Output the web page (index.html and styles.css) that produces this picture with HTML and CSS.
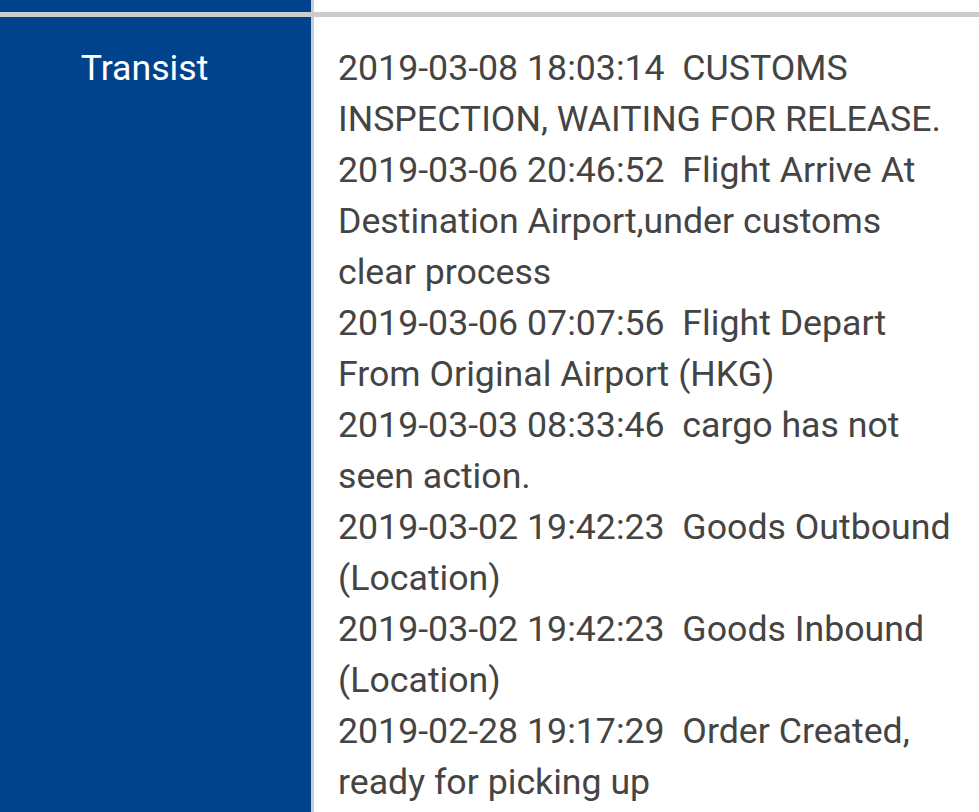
FILE: index.html
```html
<!DOCTYPE html>
<html>
<head>
<meta charset="utf-8">
<link rel="stylesheet" href="styles.css">
</head>
<body>
<div class="track">
  <div class="row top">
    <div class="label"></div>
    <div class="detail"></div>
  </div>
  <div class="row">
    <div class="label">Transist</div>
    <div class="detail">
      <div class="event">2019-03-08 18:03:14&nbsp; CUSTOMS INSPECTION, WAITING FOR RELEASE.</div>
      <div class="event">2019-03-06 20:46:52&nbsp; Flight Arrive At Destination Airport,under customs clear process</div>
      <div class="event">2019-03-06 07:07:56&nbsp; Flight Depart From Original Airport (HKG)</div>
      <div class="event">2019-03-03 08:33:46&nbsp; cargo has not seen action.</div>
      <div class="event">2019-03-02 19:42:23&nbsp; Goods Outbound (Location)</div>
      <div class="event">2019-03-02 19:42:23&nbsp; Goods Inbound (Location)</div>
      <div class="event">2019-02-28 19:17:29&nbsp; Order Created, ready for picking up</div>
    </div>
  </div>
</div>
</body>
</html>
```

FILE: styles.css
```css
html, body {
  margin: 0;
  padding: 0;
  background: #fff;
}
body {
  font-family: Roboto, "Liberation Sans", sans-serif;
  font-size: 35.7px;
  line-height: 51px;
  color: #444;
  overflow: hidden;
}
.track {
  display: flex;
  flex-direction: column;
  width: 979px;
  height: 812px;
}
.row {
  display: grid;
  grid-template-columns: 311px 1fr;
  column-gap: 3px;
  background: #ccc;
}
.row.top {
  height: 12px;
  border-bottom: 5px solid #ccc;
}
.row:not(.top) {
  flex: 1;
}
.label {
  background: #00438c;
  color: #fff;
  text-align: center;
  padding: 26px 22px 0 0;
}
.detail {
  background: #fff;
  padding: 26px 16px 0 24px;
}
.row.top .label,
.row.top .detail {
  padding: 0;
}
```
